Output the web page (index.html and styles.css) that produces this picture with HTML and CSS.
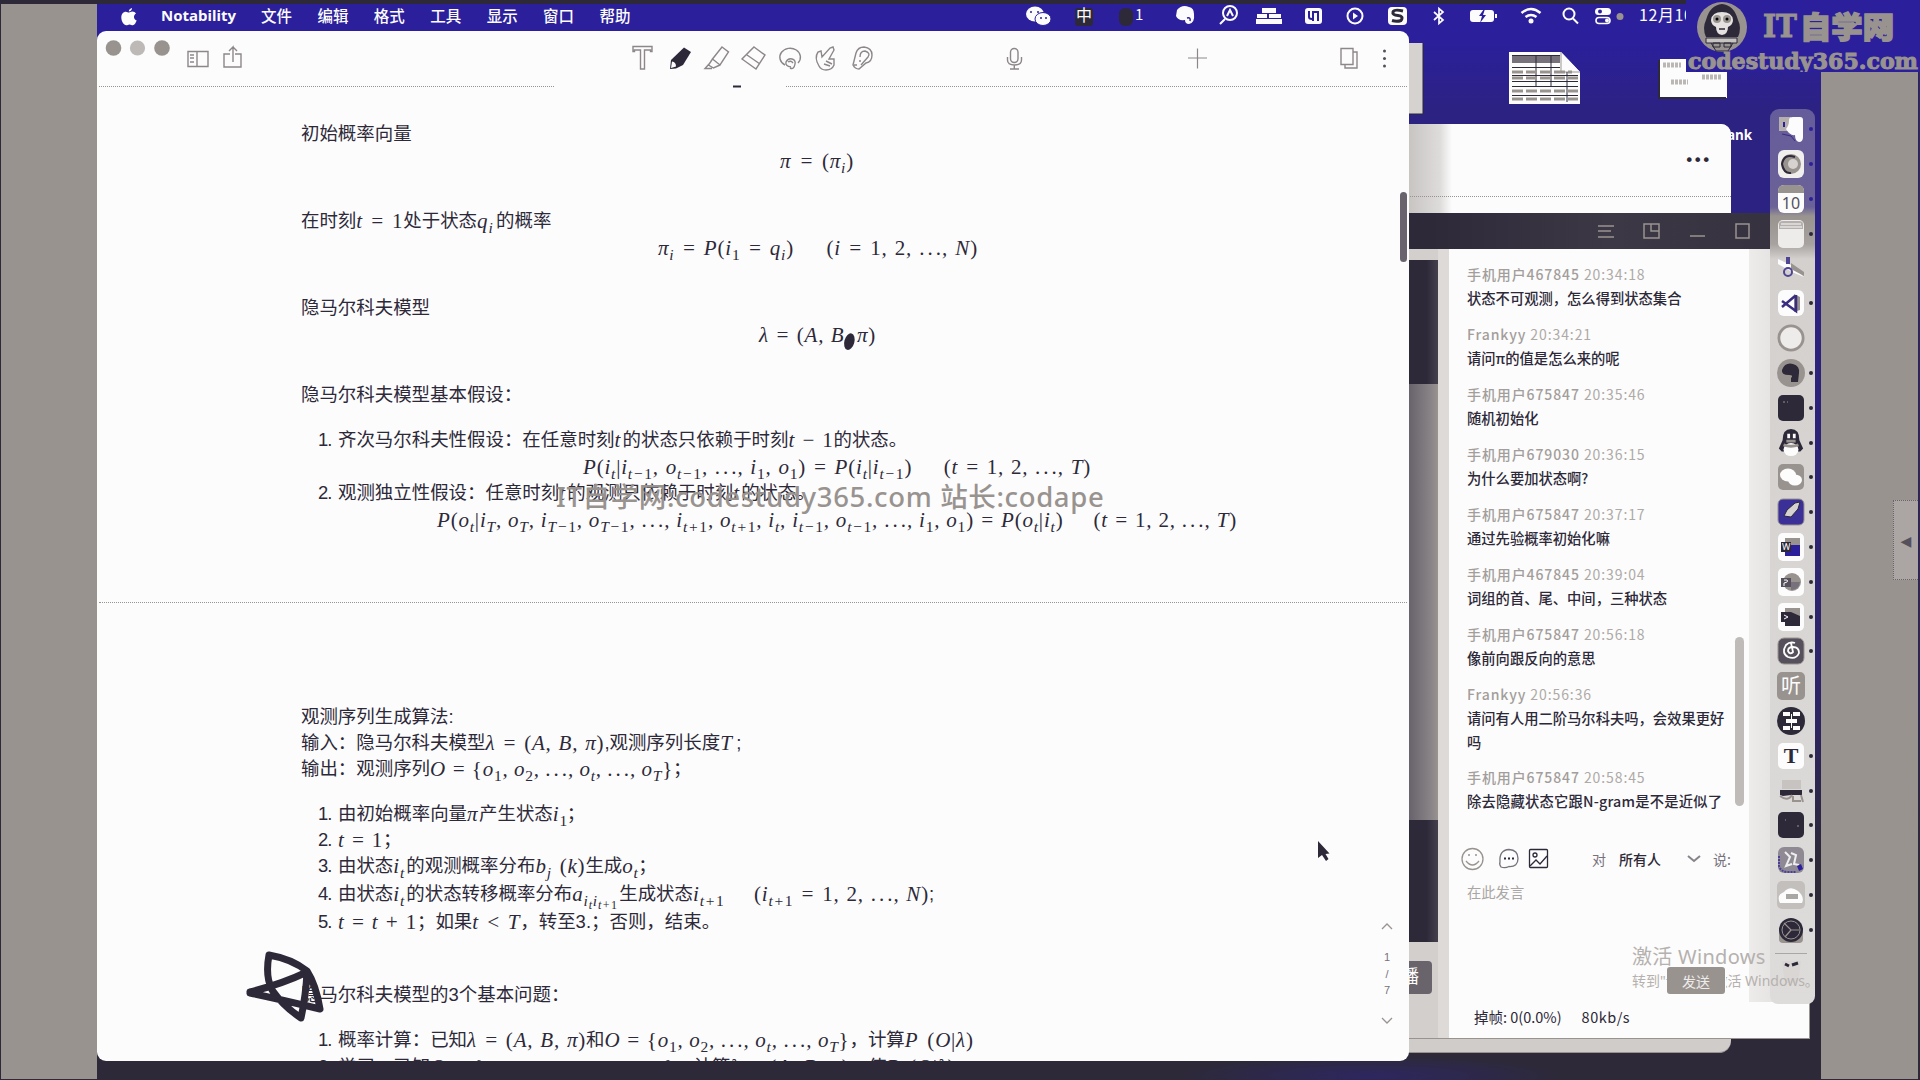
FILE: index.html
```html
<!DOCTYPE html>
<html lang="zh-CN">
<head>
<meta charset="utf-8">
<title>Notability</title>
<link rel="stylesheet" href="styles.css">
</head>
<body>
<div class="desktop">
  <header class="menubar">
    <svg class="apple" width="16" height="19" viewBox="0 0 16 19"><path d="M11 1c0 2-1.500 3.500-3.200 3.600C7.700 2.800 9.300 1.200 11 1zM8 5.500c1-.1 1.800-.9 3.300-.9 1.600 0 2.900.8 3.700 1.900-3 2-2.500 5.900.7 7-.8 2.100-2.200 4.700-3.900 4.700-1.200 0-1.700-.8-3.200-.8-1.600 0-2.100.8-3.200.8C2.700 18.200.3 14 .3 10.500c0-3.700 2.200-5.800 4.500-5.800 1.300 0 2.300.8 3.200.8z"/></svg>
    <b class="app">Notability</b>
    <nav><span>文件</span><span>编辑</span><span>格式</span><span>工具</span><span>显示</span><span>窗口</span><span>帮助</span></nav>
    <svg class="status" width="680" height="27" viewBox="1010 4 680 27">
      <g fill="#fcfcfc">
        <ellipse cx="1035" cy="14" rx="9" ry="7.500"/><ellipse cx="1043" cy="19" rx="8" ry="6.500" stroke="#2b1f9c"/>
        <path d="M1177 10q5-6 12-3 5 1 5 7 1 9-5 10-4 0-4-4-7 1-9-4z"/>
        <path d="M1262 8h14v5h-14zM1257 14h10v4h-10zM1269 14h12v4h-12zM1256 19h26v5h-26z"/>
        <rect x="1305" y="8" width="17" height="16" rx="3"/>
        <rect x="1388" y="7" width="19" height="18" rx="4"/>
        <rect x="1470" y="10" width="24" height="12" rx="3"/><rect x="1495" y="14" width="2" height="4"/>
        <circle cx="1531" cy="21" r="2.500"/>
        <rect x="1595" y="8" width="16" height="7" rx="3.500"/>
      </g>
      <path d="M1030 12h2M1037 12h2M1040 18h2M1045 18h2M1187 18q4-1 3 3" stroke="#2b1f9c" stroke-width="1.500" fill="none"/>
      <g fill="none" stroke="#fcfcfc" stroke-width="2">
        <circle cx="1230" cy="13" r="7"/><path d="M1225 19l-5 5M1227 16l3-6 3 6"/>
        <circle cx="1355" cy="16" r="7.500"/><path d="M1353 12.500v7l5-3.500z" fill="#fcfcfc" stroke="none"/>
        <path d="M1434 12l9 8-4 3.500v-15l4 3.500-9 8" stroke-width="1.700"/>
        <path d="M1521.500 13q9.500-8 19 0M1525.500 17q5.500-4 11 0" stroke-width="2.600"/>
        <circle cx="1569" cy="14" r="5.500"/><path d="M1573 18.500l5 5"/>
        <rect x="1596" y="17.500" width="14" height="6" rx="3" stroke-width="1.600"/>
      </g>
      <circle cx="1600" cy="11.500" r="2" fill="#2b1f9c"/><circle cx="1607" cy="20.500" r="2" fill="#fcfcfc"/>
      <path d="M1484 9l-5 7h3l-2 7 6-8h-3l2-6z" fill="#2b1f9c"/>
      <path d="M1309 11v6q0 2 3 2M1313 11v10M1314 12h4v9" fill="none" stroke="#2b1f9c" stroke-width="2"/>
      <path d="M1403 11q-9-2-10 1t5 3.500 3 5q-4 1.500-9 0" fill="none" stroke="#2d2939" stroke-width="3"/>
      <rect x="1075" y="8" width="18" height="18" rx="3" fill="#2d2939"/>
      <text x="1076" y="21" font-size="16">中</text>
      <rect x="1119" y="8" width="14" height="18" rx="6" fill="#2d2939"/>
      <text x="1135" y="20" font-size="15">1</text>
      <circle cx="1620" cy="16.500" r="3.500" fill="#999390"/>
      <text x="1639" y="21" font-size="16" letter-spacing=".6">12月10日</text>
    </svg>
  </header>

  <svg class="desk-icons" width="330" height="100" viewBox="1409 31 330 100">
    <path d="M1409 43h14v71h-14z" fill="#d5d2d0"/><path d="M1409 114h14M1423 43v71" stroke="#2d2939"/>
    <path d="M1509 52h52l19 20v32h-71z" fill="#fcfcfc"/>
    <path d="M1512 56h48v7h-48z" fill="#77717b"/><path d="M1561 52v20h19" fill="#fcfcfc" stroke="#999390"/>
    <path d="M1512 55.500h48M1512 67.500h48M1512 75.500h66M1512 81.500h66M1512 86.500h66M1512 95.500h66M1536 56v31M1551 56v31M1567 72v30" stroke="#2d2939"/>
    <path d="M1512 72h60M1512 78h66M1512 91h66M1512 99h66" stroke="#999390" stroke-width="3" stroke-dasharray="11 3"/>
    <path d="M1660 59h67v39h-67z" fill="#fcfcfc"/><path d="M1659 60v38h67" fill="none" stroke="#2d2939" stroke-width="2"/>
    <path d="M1663 65h18M1702 77h20M1671 82h17" stroke="#bbb7b5" stroke-width="5" stroke-dasharray="3 1"/>
  </svg>
  <span class="ank">ank</span>

  <section class="browser"><div class="browser-page"><span>•••</span></div></section>

  <section class="player">
    <div class="player-bar">
      <svg width="154" height="20" viewBox="1597 221 154 20" fill="none" stroke="#999390" stroke-width="1.500"><path d="M1598 226h16M1598 231h13M1598 237h16M1644 224h15v14h-15zM1651 224v7h8M1690 236h15M1736 224h13v14h-13z"/></svg>
    </div>
    <div class="player-body">
      <div class="video"><div class="v1"></div><div class="v2"></div><div class="v3"></div><div class="v4"><span>播</span></div></div>
      <div class="chat">
        <ul class="messages">
          <li><small><b>手机用户467845</b> 20:34:18</small><p>状态不可观测，怎么得到状态集合</p></li>
          <li><small><b>Frankyy</b> 20:34:21</small><p>请问π的值是怎么来的呢</p></li>
          <li><small><b>手机用户675847</b> 20:35:46</small><p>随机初始化</p></li>
          <li><small><b>手机用户679030</b> 20:36:15</small><p>为什么要加状态啊?</p></li>
          <li><small><b>手机用户675847</b> 20:37:17</small><p>通过先验概率初始化嘛</p></li>
          <li><small><b>手机用户467845</b> 20:39:04</small><p>词组的首、尾、中间，三种状态</p></li>
          <li><small><b>手机用户675847</b> 20:56:18</small><p>像前向跟反向的意思</p></li>
          <li><small><b>Frankyy</b> 20:56:36</small><p>请问有人用二阶马尔科夫吗，会效果更好吗</p></li>
          <li><small><b>手机用户675847</b> 20:58:45</small><p>除去隐藏状态它跟N-gram是不是近似了</p></li>
        </ul>
        <div class="compose">
          <svg width="88" height="24" viewBox="1461 848 88 24" fill="none" stroke="#77717b" stroke-width="1.300"><g stroke="#999390"><circle cx="1472.500" cy="860" r="10.500"/><path d="M1466 862q6.500 8 13 0M1468 856h2M1475 856h2"/></g><path d="M1501 868q-2-3-1-5-1-12 9-12.500 9 .5 9 9t-9 8q-4 2-8 .5z"/><path d="M1504 859.500h2M1508 859.500h2M1512 859.500h2" stroke="#2d2939" stroke-width="2"/><g stroke="#2d2939"><rect x="1529.500" y="850.500" width="18" height="18" rx="1"/><path d="M1530 867l6-6 4 4 7-8"/><circle cx="1535" cy="856" r="2"/></g></svg>
          <span class="to">对</span><span class="all">所有人</span>
          <svg width="14" height="8" viewBox="0 0 14 8" fill="none" stroke="#88828a" stroke-width="2"><path d="M1 1l6 5 6-5"/></svg>
          <span class="say">说:</span>
        </div>
        <div class="placeholder">在此发言</div>
        <div class="send-row"><button>发送</button></div>
        <footer><span>掉帧: 0(0.0%)</span><span class="rate">80kb/s</span></footer>
      </div>
      <div class="side"></div>
    </div>
    <div class="chat-thumb"></div>
  </section>

  <div class="activate"><p>激活 Windows</p><small>转到"设置"以激活 Windows。</small></div>

  <aside class="dock">
    <i><svg viewBox="0 0 28 28"><path d="M2 2h12v14H2z" fill="#b5b0ae"/><path d="M9 14q3-3 3-9 0-3 4-3h7q3 0 3 3v17q0 5-4 5-4-1-4-7-5 1-9-6z" fill="#fcfcfc"/><path d="M7 7v5" stroke="#2b1f9c" stroke-width="2"/><path d="M5 19l9 2 4 5" stroke="#3a2d80" fill="none"/></svg></i>
    <i><svg viewBox="0 0 28 28"><rect x="1" width="26" height="28" rx="6" fill="#f1efee"/><circle cx="14" cy="14" r="10" fill="#999390"/><path d="M18 7q-11-4-13 7 2 10 9 9" fill="none" stroke="#2d2939" stroke-width="2"/><circle cx="16" cy="14" r="5" fill="#d5d2d0"/></svg></i>
    <i><svg viewBox="0 0 28 28"><rect x="1" width="26" height="28" rx="6" fill="#fcfcfc"/><path d="M1 8V6q0-6 6-6h14q6 0 6 6v2z" fill="#999390"/><text x="14" y="24" text-anchor="middle" font-size="16" fill="#55505b">10</text></svg></i>
    <i><svg viewBox="0 0 28 28"><rect x="1" width="26" height="28" rx="5" fill="#eeecea"/><path d="M2 9V4q0-3 4-3h16q4 0 4 3v5z" fill="#b5b0ae"/><path d="M4 4h20M3 7h22" stroke="#fcfcfc"/></svg></i>
    <i><svg viewBox="0 0 28 28"><path d="M1 4l15 7 11 11-12-5L1 9z" fill="#fcfcfc"/><path d="M14 8l13 9v4L14 14z" fill="#999390"/><circle cx="11" cy="17" r="4" fill="none" stroke="#504593" stroke-width="2"/><path d="M11 2v7" stroke="#504593" stroke-width="4"/></svg></i>
    <i><svg viewBox="0 0 28 28"><rect x="1" y="1" width="26" height="26" rx="6" fill="#fcfcfc"/><path d="M17 5l6 3v13l-6 2z" fill="#999390"/><path d="M19 6v16L5 12M5 18L18 7" fill="none" stroke="#3a2d80" stroke-width="2.500"/></svg></i>
    <i><svg viewBox="-1 -1 30 30"><circle cx="14" cy="14" r="13" fill="#eeecea" stroke="#999390" stroke-width="3"/></svg></i>
    <i><svg viewBox="0 0 28 28"><circle cx="14" cy="14" r="14" fill="#999390"/><path d="M5 11Q8 3 16 5q7 2 6 9l-1 9h-7v-4q3-3-2-3-8 0-7-5z" fill="#2d2939"/></svg></i>
    <i><svg viewBox="0 0 28 28"><rect x="1" y="1" width="26" height="26" rx="5" fill="#2d2939"/><path d="M6 8h2M10 8h1" stroke="#999390"/></svg></i>
    <i><svg viewBox="0 0 28 30"><path d="M5 12Q5 0 14 0t9 12l4 9-3 3H4l-3-3z" fill="#2d2939"/><ellipse cx="14" cy="22" rx="8" ry="7" fill="#fcfcfc"/><path d="M10 5h3v5h-3zM16 5h3v5h-3z" fill="#fcfcfc"/><path d="M9 13h10" stroke="#999390" stroke-width="3"/><path d="M6 17q8 3 16 0" stroke="#999390" stroke-width="3" fill="none"/></svg></i>
    <i><svg viewBox="0 0 28 28"><rect x="1" y="1" width="26" height="26" rx="5" fill="#999390"/><ellipse cx="11" cy="12" rx="8" ry="6.500" fill="#fcfcfc"/><ellipse cx="18" cy="17" rx="7" ry="5.500" fill="#fcfcfc"/></svg></i>
    <i><svg viewBox="0 0 28 28"><rect x="1" y="1" width="26" height="26" rx="5" fill="#3b3098" stroke="#999390"/><path d="M7 18l3-6 8-7 5-1-2 7-7 8z" fill="#d5d2d0" stroke="#2d2939"/></svg></i>
    <i><svg viewBox="0 0 28 28"><rect x="1" width="26" height="28" rx="5" fill="#fcfcfc"/><path d="M8 5h15v7H8z" fill="#999390"/><path d="M8 12h15v11H8z" fill="#2b1f9c"/><path d="M4 9h10v10H4z" fill="#2d2939"/><text x="5" y="17" font-size="9" fill="#fcfcfc">W</text></svg></i>
    <i><svg viewBox="0 0 28 28"><rect x="1" width="26" height="28" rx="5" fill="#fcfcfc"/><circle cx="15" cy="14" r="9" fill="#999390"/><path d="M4 10h10v9H4z" fill="#55505b"/><path d="M14 14h9q-1 8-9 8z" fill="#77717b"/><path d="M7 12h3q2 2-3 3v3" fill="none" stroke="#fcfcfc"/></svg></i>
    <i><svg viewBox="0 0 28 28"><rect x="1" width="26" height="28" rx="5" fill="#fcfcfc"/><path d="M8 5h15v8H8z" fill="#999390"/><path d="M4 9h10l9 4v10H8v-4H4z" fill="#2d2939"/><path d="M7 12l4 2-4 2" stroke="#fcfcfc" fill="none"/></svg></i>
    <i><svg viewBox="0 0 28 28"><rect x="1" y="1" width="26" height="26" rx="6" fill="#55505b" stroke="#999390"/><path d="M18 6q-5-2-9 2-5 8 2 12 8 3 11-4 0-6-6-6-5 0-5 4 2 4 5 1l-2-9" fill="none" stroke="#fcfcfc" stroke-width="1.800"/></svg></i>
    <i><svg viewBox="0 0 28 28"><rect width="28" height="28" rx="5" fill="#999390"/><text x="14" y="21" text-anchor="middle" font-size="20" fill="#fcfcfc">听</text></svg></i>
    <i><svg viewBox="0 0 28 28"><circle cx="14" cy="14" r="14" fill="#2d2939"/><path d="M6 5h7v4H6zM16 5h7v4h-7zM9 12h11v4H9zM6 19h7v4H6zM16 19h7v4h-7z" fill="#fcfcfc"/><path d="M14.500 7v14" stroke="#fcfcfc"/></svg></i>
    <i><svg viewBox="0 0 28 28"><rect x="1" y="1" width="26" height="26" rx="5" fill="#fcfcfc"/><text class="tt" x="14" y="21" text-anchor="middle" font-size="22" fill="#2d2939">T</text></svg></i>
    <i><svg viewBox="0 0 28 28"><path d="M5 3h19v9H5z" fill="#c6c3c1"/><path d="M3 13h22v5H14l-8 1-3-1z" fill="#2d2939"/><path d="M3 19q8 6 12-1M16 19v5h8M24 18l2 7" stroke="#999390" stroke-width="2" fill="none"/></svg></i>
    <i><svg viewBox="0 0 28 28"><rect x="1" y="1" width="26" height="26" rx="5" fill="#2d2939"/><path d="M8 9h1M20 15h2" stroke="#999390"/></svg></i>
    <i><svg viewBox="0 0 28 28"><rect x="1" y="1" width="26" height="26" rx="6" fill="#8f8994"/><path d="M2 10v10q2 6 9 6h8" fill="none" stroke="#4a3f98" stroke-width="2" stroke-dasharray="2 1"/><path d="M8 6l5 5-4 9 6-2M14 7l5 2-2 9 5 1" fill="none" stroke="#eee" stroke-width="2"/><path d="M20 20l4-2 2 5-4 2z" fill="#2b1f9c"/></svg></i>
    <i><svg viewBox="0 0 28 28"><rect width="28" height="28" rx="5" fill="#c2bfbd"/><path d="M3 22q-4-8 4-11 6-7 14-1 7 6 4 12z" fill="#fcfcfc"/><rect x="9" y="13" width="12" height="5" fill="#aaa6a4"/></svg></i>
    <i><svg viewBox="0 0 28 28"><path d="M2 12h24v11q0 4-4 4H6q-4 0-4-4z" fill="#999390"/><circle cx="14" cy="14" r="12" fill="#2d2939"/><circle cx="14" cy="14" r="9" fill="none" stroke="#999390"/><path d="M7 7l7 7h8M14 14l-6 7" stroke="#999390" fill="none" stroke-width="1.200"/></svg></i>
    <hr>
    <i class="bin"><svg viewBox="0 0 28 28"><path d="M5 3h19l-3 22H8z" fill="#d9d6d4"/><path d="M8 6l4 2M15 7l6-2" stroke="#2d2939" stroke-width="3"/></svg></i>
  </aside>

  <main class="notes">
    <div class="toolbar">
      <svg width="1312" height="55" viewBox="97 31 1312 55" fill="none" stroke="#8d878a" stroke-width="1.400">
        <g fill="#999390" stroke="none"><circle cx="113.500" cy="48" r="7.800"/><circle cx="137.500" cy="48" r="7.600" fill="#bdb9b7"/><circle cx="162" cy="48" r="7.800"/></g>
        <path d="M188 51.500h20v15h-20zM197 51.500v15M190 55h4M190 58h4M190 62h4M230 54h-6v13h17V54h-6M233 62V47l-4 4M233 47l4 4"/>
        <path d="M633 46.500h19v5h-1.500v-1.500h-6V69h-4V50h-6v1.500H633z"/>
        <path d="M684 47.500l7 4.500-8 13-7 3.500-6 .5 1-9z" fill="#2d2939" stroke="none"/><path d="M672 61.500q4 .5 4 5l-5 1.500z" fill="#fcfcfc" stroke="none"/>
        <path d="M722 47l6.500 5-8.500 13-7.500-6zM712.500 59l-4 6 5 3 6.500-3M709 64l-4 4.500h7"/>
        <path d="M754 47l11 8-9 14-14-10zM747 55l13 9"/>
        <path d="M785 65a10.300 9 0 1 1 13-2M791 67q-6-1-5-5 2-4 6-3 4 1 3 5-1 6-5 4M788 62q3-2 5 1"/>
        <path d="M819 66q-5-8-1-14l3-1 1 6 8-9 3-1 1 3-5 9 5 0v6q-2 5-8 5-5 0-7-4zM826 61l6 3M824 64l6 2"/>
        <path d="M856 53q2-6 8-6 8 1 8 8 0 7-6 8l-7 6q-4 0-6-4zM860 57q0-6 5-6 6 2 3 6l-7 8M854 65h3M859 61h2"/>
        <rect x="1010.500" y="48.500" width="7.500" height="14" rx="3.700"/><path d="M1007.500 57v3q0 5 7 5t7-5v-3M1014.300 65v4M1010 69h9"/>
        <path d="M1188 58h19M1197.500 48.500v20" stroke-width="1.200"/>
        <path d="M1341 48.500h12v16h-12zM1353 52h4v16h-12v-3.500"/>
        <g fill="#55505b" stroke="none"><circle cx="1384.500" cy="51" r="1.500"/><circle cx="1384.500" cy="58.500" r="1.500"/><circle cx="1384.500" cy="66" r="1.500"/></g>
      </svg>
    </div>
    <div class="rule"><span></span><em></em><span></span></div>
    <article class="page one">
      <p>初始概率向量</p>
      <p class="f"><i class="m f1">π = <u>(</u>π<sub>i</sub><u>)</u></i></p>
      <p class="sec">在时刻<i class="m w47">t = <u>1</u></i>处于状态<i class="m w19">q<sub>i</sub></i>的概率</p>
      <p class="f"><i class="m f2">π<sub>i</sub> = P<u>(</u>i<sub><u>1</u></sub> = q<sub>i</sub><u>)</u> <s></s> <u>(</u>i = <u>1</u>, <u>2</u>, <em>...</em>, N<u>)</u></i></p>
      <p class="sec">隐马尔科夫模型</p>
      <p class="f"><i class="m f3">λ = <u>(</u>A, B, π<u>)</u></i></p>
      <p class="sec">隐马尔科夫模型基本假设：</p>
      <p class="li first"><b>1.</b>齐次马尔科夫性假设：在任意时刻<i class="m w8">t</i>的状态只依赖于时刻<i class="m w45">t − <u>1</u></i>的状态。</p>
      <p class="f"><i class="m f4">P<u>(</u>i<sub>t</sub><u>|</u>i<sub>t−<u>1</u></sub>, o<sub>t−<u>1</u></sub>, <em>...</em>, i<sub><u>1</u></sub>, o<sub><u>1</u></sub><u>)</u> = P<u>(</u>i<sub>t</sub><u>|</u>i<sub>t−<u>1</u></sub><u>)</u> <s></s> <u>(</u>t = <u>1</u>, <u>2</u>, <em>...</em>, T<u>)</u></i></p>
      <p class="li tight"><b>2.</b>观测独立性假设：任意时刻<i class="m w8">t</i>的观测只依赖于时刻<i class="m w8">t</i>的状态。</p>
      <p class="f"><i class="m f5">P<u>(</u>o<sub>t</sub><u>|</u>i<sub>T</sub>, o<sub>T</sub>, i<sub>T−<u>1</u></sub>, o<sub>T−<u>1</u></sub>, <em>...</em>, i<sub>t+<u>1</u></sub>, o<sub>t+<u>1</u></sub>, i<sub>t</sub>, i<sub>t−<u>1</u></sub>, o<sub>t−<u>1</u></sub>, <em>...</em>, i<sub><u>1</u></sub>, o<sub><u>1</u></sub><u>)</u> = P<u>(</u>o<sub>t</sub><u>|</u>i<sub>t</sub><u>)</u> <s></s> <u>(</u>t = <u>1</u>, <u>2</u>, <em>...</em>, T<u>)</u></i></p>
    </article>
    <div class="rule full"><span></span></div>
    <article class="page two">
      <p>观测序列生成算法:</p>
      <p>输入：隐马尔科夫模型<i class="m w119">λ = <u>(</u>A, B, π<u>)</u></i>,观测序列长度<i class="m w16">T</i>;</p>
      <p>输出：观测序列<i class="m w243">O = <u>{</u>o<sub><u>1</u></sub>, o<sub><u>2</u></sub>, <em>...</em>, o<sub>t</sub>, <em>...</em>, o<sub>T</sub><u>}</u></i>；</p>
      <p class="li first"><b>1.</b>由初始概率向量<i class="m w12">π</i>产生状态<i class="m w14">i<sub><u>1</u></sub></i>；</p>
      <p class="li"><b>2.</b><i class="m w45">t = <u>1</u></i>；</p>
      <p class="li"><b>3.</b>由状态<i class="m w13">i<sub>t</sub></i>的观测概率分布<i class="m w50">b<sub>j</sub> <u>(</u>k<u>)</u></i>生成<i class="m w16">o<sub>t</sub></i>；</p>
      <p class="li"><b>4.</b>由状态<i class="m w13">i<sub>t</sub></i>的状态转移概率分布<i class="m w47">a<sub>i<small>t</small>i<small>t+<u>1</u></small></sub></i>生成状态<i class="m w30">i<sub>t+<u>1</u></sub></i><s class="wide"></s><i class="m w174"><u>(</u>i<sub>t+<u>1</u></sub> = <u>1</u>, <u>2</u>, <em>...</em>, N<u>)</u></i>;</p>
      <p class="li"><b>5.</b><i class="m w79">t = t + <u>1</u></i>；如果<i class="m w48">t &lt; T</i>，转至3.；否则，结束。</p>
      <p class="ask">隐马尔科夫模型的3个基本问题：</p>
      <p class="li first"><b>1.</b>概率计算：已知<i class="m w119">λ = <u>(</u>A, B, π<u>)</u></i>和<i class="m w245">O = <u>{</u>o<sub><u>1</u></sub>, o<sub><u>2</u></sub>, <em>...</em>, o<sub>t</sub>, <em>...</em>, o<sub>T</sub><u>}</u></i>，计算<i class="m w69">P <u>(</u>O<u>|</u>λ<u>)</u></i></p>
      <p class="li"><b>2.</b>学习：已知<i class="m w245">O = <u>{</u>o<sub><u>1</u></sub>, o<sub><u>2</u></sub>, <em>...</em>, o<sub>t</sub>, <em>...</em>, o<sub>T</sub><u>}</u></i>，计算<i class="m w119">λ = <u>(</u>A, B, π<u>)</u></i>，使<i class="m w69">P <u>(</u>O<u>|</u>λ<u>)</u></i></p>
    </article>
    <svg class="ink" width="1312" height="1030" viewBox="97 31 1312 1030">
      <g fill="none" stroke="#2d2939" stroke-linecap="round" stroke-linejoin="round"><path d="M250 992Q282 984 307 972Q306 995 301 1018Q283 1006 272 990Q265 976 269 955Q292 959 307 971Q316 985 320 1009Q283 1000 250 993" stroke-width="7"/></g>
      <ellipse cx="849.500" cy="341.500" rx="5" ry="8.500" fill="#2d2939" transform="rotate(15 849 341)"/>
      <path d="M733 86.500h8" stroke="#2d2939" stroke-width="2"/>
      <path d="M1318 841v17l4-3 4 6 2.500-2-3-5 4-.5z" fill="#2d2939"/>
      <rect x="1400" y="192" width="7" height="70" rx="3.500" fill="#68636c"/>
      <g fill="none" stroke="#999390" stroke-width="1.300"><path d="M1382 929l5-5 5 5M1382 1018l5 5 5-5"/></g>
      <g fill="#77717b" font-size="11" text-anchor="middle"><text x="1387" y="961">1</text><text x="1387" y="978">/</text><text x="1387" y="994">7</text></g>
    </svg>
  </main>

  <div class="watermark">IT自学网:codestudy365.com 站长:codape</div>
  <div class="gutter left"></div>
  <div class="gutter right"></div>
  <div class="tab">◀</div>
  <svg class="brand" width="234" height="72" viewBox="1686 0 234 72">
    <path d="M1686 0h234v72h-234z" fill="#2b1f9c"/>
    <circle cx="1722" cy="27" r="25" fill="#999390"/>
    <path d="M1706 37q-4-9 0-17 4-15 16-16 12 1 16 16 4 8 0 17z" fill="#2d2939"/>
    <path d="M1711 20q1-8 11-8t11 8q0 5-5 7 0 7-6 8-6-1-6-8-5-2-5-7z" fill="#e4e1e0"/>
    <circle cx="1717" cy="19" r="4" fill="#999390"/><circle cx="1727" cy="19" r="4" fill="#999390"/><circle cx="1717" cy="19" r="1.500"/><circle cx="1727" cy="19" r="1.500"/><path d="M1719 29h6" stroke="#2d2939" stroke-width="1.500"/>
    <path d="M1706 38h31v5h-31z" fill="#c6c3c1" stroke="#2d2939"/><path d="M1711 43l5 8h12l5-8M1713 43h7v4h-7zM1724 43h7v4h-7z" fill="none" stroke="#2d2939"/>
    <g fill="#999390" stroke="#999390"><text class="slab" x="1763" y="37" font-size="31" textLength="34" lengthAdjust="spacingAndGlyphs">IT</text><text class="cjk" x="1800" y="38" font-size="30" textLength="94" lengthAdjust="spacingAndGlyphs">自学网</text>
    <text class="slab" x="1688" y="69" font-size="22" textLength="230" lengthAdjust="spacingAndGlyphs">codestudy365.com</text></g>
  </svg>
</div>
</body>
</html>
```
FILE: styles.css
```css
:root {
  --ink: #2d2939;
  --blue: #2b1f9c;
  --gray: #999390;
  --paper: #fcfcfc;
}
* { box-sizing: border-box; }
body {
  margin: 0;
  overflow: hidden;
  color: var(--ink);
  font-family: "Liberation Sans", "Noto Sans CJK SC", sans-serif;
}
p, ul { margin: 0; padding: 0; list-style: none; }
i, em { font-style: normal; }
svg { display: block; flex: none; }

.desktop {
  position: relative;
  width: 1920px;
  height: 1080px;
  overflow: hidden;
  background:
    radial-gradient(ellipse 190px 20px at 1370px 1076px, #2d2760, transparent),
    linear-gradient(#2b1f9c 0, #2b1f9c 40px, #2c2282 110px, #2c2282 250px, #2d2466 700px, #2d2939 860px);
}
.menubar {
  display: flex;
  align-items: center;
  height: 31px;
  border-top: 4px solid var(--ink);
  padding-left: 121px;
  background: var(--blue);
  color: var(--paper);
}
.apple { fill: var(--paper); margin-top: -3px; }
.app {
  width: 100px;
  margin: -6px 0 0 24px;
  font: bold 15px "Noto Sans", sans-serif;
}
.menubar nav {
  display: flex;
  gap: 25.4px;
  margin-top: -6px;
  font: 500 15.500px "Noto Sans CJK SC", sans-serif;
}
.status {
  margin-left: auto;
  margin-right: 230px;
  fill: var(--paper);
  font-family: "Noto Sans CJK SC", sans-serif;
}
.desk-icons { position: absolute; left: 1409px; top: 31px; }
.ank {
  position: absolute;
  left: 1727px;
  top: 125px;
  color: var(--paper);
  font: bold 13.500px/20px "Noto Sans", sans-serif;
}

/* windows behind the notes */
.browser {
  position: absolute;
  left: 1380px;
  top: 124px;
  width: 351px;
  height: 929px;
  border-radius: 0 10px 12px 0;
  border-bottom: 1px solid var(--gray);
  background: linear-gradient(90deg, #c8c5c3 30px, #dedcdb 60px, var(--paper) 72px, var(--paper) 100px) 0 0 / 100% 100px no-repeat, #cfccca;
}
.browser-page {
  height: 73px;
  padding: 25px 21px 0;
  border-bottom: 1px dotted var(--gray);
  text-align: right;
  font: 16px/24px "DejaVu Sans", sans-serif;
  letter-spacing: -.9px;
}
.player {
  position: absolute;
  left: 1409px;
  top: 213px;
  width: 401px;
  height: 826px;
  display: flex;
  flex-direction: column;
  border-bottom: 1px solid var(--gray);
  border-right: 1px solid var(--gray);
  background: var(--paper);
}
.player-bar {
  display: flex;
  align-items: center;
  justify-content: flex-end;
  height: 36px;
  margin-right: -1px;
  padding-right: 59px;
  background: linear-gradient(90deg, var(--ink) 20px, #3d3845 200px, #35303e);
}
.player-body { flex: 1; display: flex; }
.video {
  display: flex;
  flex-direction: column;
  width: 29px;
  padding-top: 11px;
  background: #d2cfcd;
  margin-right: 11px;
  box-shadow: 11px 0 #dddad8;
}
.v1 { height: 124px; background: linear-gradient(90deg, var(--ink) 60%, #45404c); }
.v2 { height: 436px; background: linear-gradient(90deg, #68636c, #8b8688 80%, var(--gray)); }
.v3 { height: 122px; background: linear-gradient(90deg, var(--ink) 60%, #45404c); }
.v4 {
  width: 23px;
  height: 33px;
  margin-top: 19px;
  overflow: hidden;
  border-radius: 0 4px 4px 0;
  background: #69646c;
  color: var(--paper);
  font-size: 18px;
  line-height: 32px;
}
.v4 span { margin-left: -8px; }
.chat {
  width: 300px;
  display: flex;
  flex-direction: column;
  padding: 13px 0 0 18px;
  font-family: "Noto Sans CJK SC", sans-serif;
}
.messages { height: 578px; }
.messages li { margin-bottom: 12px; font-size: 14.300px; line-height: 24px; width: 262px; }
.messages small {
  display: block;
  color: #aeaaa7;
  font-size: 14px;
  letter-spacing: .9px;
  white-space: nowrap;
}
.messages small b { font-weight: 500; color: #a39e9b; }
.messages p { font-weight: 500; }
.messages li:nth-child(8) p { line-height: 23.500px; }
.messages li:last-child p { letter-spacing: .2px; white-space: nowrap; }
.compose {
  display: flex;
  align-items: center;
  height: 36px;
  margin: 1px 0 0 -6px;
  font-size: 14px;
  color: #77717b;
}
.to { margin-left: 43px; }
.all { margin: 0 26px 0 13px; color: var(--ink); font-weight: 500; }
.say { margin-left: 12px; white-space: nowrap; }
.placeholder { height: 60px; padding-top: 4px; font-size: 14.300px; color: #aaa6a3; }
.send-row { display: flex; justify-content: flex-end; height: 58px; padding: 30px 24px 0 0; }
.send-row button {
  flex: none;
  width: 58px;
  height: 27px;
  padding: 0;
  border: 0;
  border-radius: 3px;
  background: var(--gray);
  color: #eeecea;
  font: 14px/26px "Noto Sans CJK SC", sans-serif;
}
.chat footer {
  display: flex;
  gap: 20px;
  margin: 10px 0 0 7px;
  font-size: 14.500px;
  line-height: 24px;
}
.rate { letter-spacing: .5px; }
.side {
  flex: 1;
  margin-bottom: 36px;
  background: linear-gradient(90deg, #eeeceb, #d9d6d5);
}
.chat-thumb {
  position: absolute;
  left: 326px;
  top: 424px;
  width: 9px;
  height: 169px;
  border-radius: 5px;
  background: #bfbbb9;
}
.activate {
  position: absolute;
  z-index: 3;
  left: 1632px;
  top: 942px;
  color: #b5b1ae;
  white-space: nowrap;
  font: 20px/30px "Noto Sans", "Noto Sans CJK SC", sans-serif;
}
.activate p { letter-spacing: .3px; }
.activate small { display: block; font-size: 14px; line-height: 18px; clip-path: polygon(0 0, 35px 0, 35px 100%, 94px 100%, 94px 0, 100% 0, 100% 100%, 0 100%); }

.dock {
  position: absolute;
  left: 1770px;
  top: 109px;
  width: 45px;
  height: 895px;
  display: grid;
  grid-template-rows: repeat(24, 34.800px) 12px 26px;
  align-content: start;
  justify-items: center;
  padding: 3px 4px 0 0;
  border-radius: 9px 9px 8px 8px;
  background: linear-gradient(#655c9b 0, #6b6298 98px, #999390 107px, #a7a29f 135px, #d3d0ce 150px, #dedcda 100%);
}
.dock i { position: relative; display: flex; align-items: center; }
.dock i svg { width: 28px; height: 28px; }
.dock i::after {
  content: "";
  position: absolute;
  right: -8px;
  width: 4px;
  height: 4px;
  border-radius: 2px;
  background: var(--ink);
}
.dock i:nth-child(-n+3)::after { background: var(--blue); }
.dock i:nth-child(5)::after, .dock i:nth-child(7)::after,
.dock i:nth-child(17)::after, .dock i:nth-child(18)::after, .dock .bin::after { display: none; }
.dock hr { width: 32px; margin: 6px 0; border: 0; border-top: 1px solid #aaa6a4; }
.dock text { font-family: "Noto Sans", "Noto Sans CJK SC", sans-serif; }
.dock .tt { font-family: "Liberation Serif", serif; font-weight: bold; }

/* notes window */
.notes {
  position: absolute;
  left: 97px;
  top: 31px;
  width: 1312px;
  height: 1030px;
  overflow: hidden;
  border-radius: 9px;
  background: var(--paper);
}
.toolbar { height: 55px; }
.rule { display: flex; height: 1px; padding: 0 2px; }
.rule span { width: 455px; border-top: 1px dotted var(--gray); }
.rule em { width: 232px; }
.rule span:last-child { flex: 1; }
.page { padding-left: 204px; font-size: 18.450px; }
.page p {
  height: 24px;
  line-height: 24px;
  margin-bottom: 3px;
  white-space: nowrap;
}
.one { height: 515px; padding-top: 35px; }
.two { padding-top: 102px; }
.page .f { margin-top: 3px; margin-bottom: 0; }
.page .sec { margin-top: 36px; }
.page .li { padding-left: 17px; }
.page .first { margin-top: 21px; }
.page .tight { margin-top: 2px; margin-bottom: 2px; }
.two p:nth-child(-n+2) { margin-bottom: 2px; }
.two p:nth-child(5), .two p:nth-child(4) { margin-bottom: 2px; }
.two p:nth-child(6), .two p:nth-child(7) { margin-bottom: 4px; }
.page .ask { margin-top: 49px; }
.page .li b { display: inline-block; width: 20px; font-weight: 400; letter-spacing: -1px; }
.m {
  display: inline-block;
  height: 24px;
  white-space: normal;
  vertical-align: top;
  text-align: left;
  text-align-last: justify;
  letter-spacing: .8px;
  word-spacing: -4px;
  font: italic 21px/24px "Liberation Serif", serif;
}
.m u { font-style: normal; text-decoration: none; }
.m em { margin-right: -2px; font-style: normal; letter-spacing: 3px; }
.m sub { font-size: 15.500px; line-height: 0; vertical-align: -5px; }
.m sub small { font-size: 12px; vertical-align: -3px; }
s { display: inline-block; width: 18px; text-decoration: none; }
.wide { width: 31px; }
.f1 { width: 74px; margin-left: 479px; }
.f2 { width: 320px; margin-left: 357px; }
.f3 { width: 117px; margin-left: 458px; }
.f4 { width: 508px; margin-left: 282px; }
.f5 { width: 800px; margin-left: 136px; }
.w8 { width: 8px; }
.w12 { width: 12px; }
.w13 { width: 13px; }
.w14 { width: 14px; }
.w16 { width: 16px; }
.w19 { width: 19px; }
.w30 { width: 30px; }
.w45 { width: 45px; }
.w47 { width: 47px; }
.w48 { width: 48px; }
.w50 { width: 50px; }
.w69 { width: 69px; }
.w79 { width: 79px; }
.w119 { width: 119px; }
.w174 { width: 175px; }
.w243 { width: 243px; }
.w245 { width: 245px; }
.ink { position: absolute; left: 0; top: 0; }

/* video overlays */
.watermark {
  position: absolute;
  left: 556px;
  top: 477px;
  color: var(--gray);
  white-space: nowrap;
  letter-spacing: .65px;
  font: 500 27.500px/40px "Noto Sans", "Noto Sans CJK SC", sans-serif;
}
.gutter { position: absolute; top: 4px; bottom: 1px; width: 97px; background: var(--gray); }
.left { left: 0; border-left: 1px solid var(--ink); }
.right { left: 1821px; width: 98px; top: 0; border-right: 1px solid var(--ink); }
.tab {
  position: absolute;
  left: 1893px;
  top: 500px;
  width: 25px;
  height: 80px;
  border: 1px dotted #68636c;
  border-right: 0;
  background: #aba6a3;
  color: #55505b;
  font: 14px/80px "DejaVu Sans", sans-serif;
  text-align: center;
}
.brand { position: absolute; right: 0; top: 0; }
.slab { font-family: "DejaVu Serif", serif; font-weight: bold; }
.cjk { font-family: "Noto Sans CJK SC", sans-serif; font-weight: 900; stroke-width: 1.500px; }
```
